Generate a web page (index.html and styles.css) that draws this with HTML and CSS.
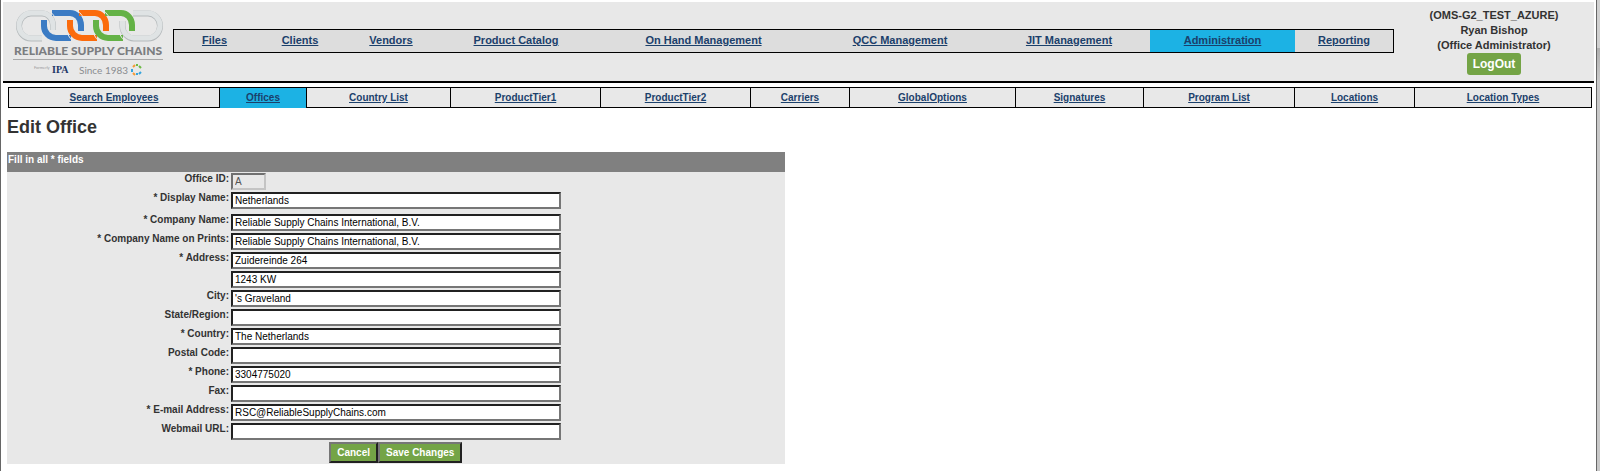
FILE: index.html
```html
<!DOCTYPE html>
<html lang="en">
<head>
<meta charset="utf-8">
<title>Edit Office</title>
<link rel="stylesheet" href="styles.css">
</head>
<body>
<div class="page">
  <header class="masthead">
    <a class="logo" href="#" aria-label="Reliable Supply Chains">
      <svg class="logo-art" viewBox="0 0 154 72" width="154" height="72">
        <g fill="none">
          <g stroke="#b5babc" stroke-width="6">
            <path d="M29 31.500H18A12 12.500 0 0 1 18 6.500H29A11 12 0 0 1 40 18V23"/>
            <path d="M109.500 14V19A12 12.500 0 0 0 121 31.500H135A12 12.500 0 0 0 135 6.500H120"/>
          </g>
          <g stroke="#dfe3e4" stroke-width="5">
            <path d="M29 31H18A12 12.500 0 0 1 18 6H29A11 12 0 0 1 40 18V23"/>
            <path d="M109.500 14V19A12 12 0 0 0 121 31H135A12 12.500 0 0 0 135 6H120"/>
          </g>
          <g stroke-width="6">
            <path stroke="#3b7bc4" d="M31 13V19A12 12 0 0 0 43 31H58M39 6H57A11 12 0 0 1 68 18V24"/>
            <path stroke="#fb6b0c" d="M57 13V19A12 12 0 0 0 69 31H84M66 6H82A11 12 0 0 1 93 18V24"/>
            <path stroke="#64b246" d="M83 13V19A12 12 0 0 0 95 31H110M92 6H108A11 12 0 0 1 119 18V24"/>
          </g>
          <g stroke="#e8e8e8" stroke-width="1">
            <path d="M63 3Q71 7 72 18M89 3Q97 7 98 18M53 18Q53 29 61 35M79 18Q79 29 87 35M105 18Q105 29 113 35M36 4Q43 8 44 18"/>
          </g>
        </g>
        <text class="logo-name" x="75" y="48" text-anchor="middle">RELIABLE SUPPLY CHAINS</text>
        <path stroke="#a8a8a8" d="M0 52.500H150"/>
        <text class="logo-small" x="21" y="62">Formerly</text>
        <text class="logo-ipa" x="39" y="66">IPA</text>
        <text class="logo-since" x="66" y="67">Since 1983</text>
        <g fill="none" stroke-width="2">
          <path stroke="#f59a35" d="M120 60L122 58M120 66L122 68"/>
          <path stroke="#6cba45" d="M123 58H125M126 59L128 61"/>
          <path stroke="#36a5dc" d="M119 62V65M123 67H125M126 67L128 65"/>
        </g>
      </svg>
    </a>
    <nav class="main-nav" aria-label="Main">
      <span><a href="#">Files</a></span>
      <span><a href="#">Clients</a></span>
      <span><a href="#">Vendors</a></span>
      <span><a href="#">Product Catalog</a></span>
      <span><a href="#">On Hand Management</a></span>
      <span><a href="#">QCC Management</a></span>
      <span><a href="#">JIT Management</a></span>
      <span class="current"><a href="#">Administration</a></span>
      <span><a href="#">Reporting</a></span>
    </nav>
    <div class="account">
      <div>(OMS-G2_TEST_AZURE)</div>
      <div>Ryan Bishop</div>
      <div>(Office Administrator)</div>
      <button class="logout" type="button">LogOut</button>
    </div>
  </header>
  <nav class="sub-nav" aria-label="Administration">
    <span><a href="#">Search Employees</a></span>
    <span class="current"><a href="#">Offices</a></span>
    <span><a href="#">Country List</a></span>
    <span><a href="#">ProductTier1</a></span>
    <span><a href="#">ProductTier2</a></span>
    <span><a href="#">Carriers</a></span>
    <span><a href="#">GlobalOptions</a></span>
    <span><a href="#">Signatures</a></span>
    <span><a href="#">Program List</a></span>
    <span><a href="#">Locations</a></span>
    <span><a href="#">Location Types</a></span>
  </nav>
  <main>
    <h1>Edit Office</h1>
    <form class="panel">
      <h2>Fill in all * fields</h2>
      <div class="row"><label for="id">Office ID:</label><input class="short" id="id" value="A" disabled></div>
      <div class="row spaced"><label for="display">* Display Name:</label><input id="display" value="Netherlands"></div>
      <div class="row"><label for="company">* Company Name:</label><input id="company" value="Reliable Supply Chains International, B.V."></div>
      <div class="row"><label for="prints">* Company Name on Prints:</label><input id="prints" value="Reliable Supply Chains International, B.V."></div>
      <div class="row"><label for="address">* Address:</label><input id="address" value="Zuidereinde 264"></div>
      <div class="row"><span></span><input id="address2" aria-label="Address line 2" value="1243 KW"></div>
      <div class="row"><label for="city">City:</label><input id="city" value="'s Graveland"></div>
      <div class="row"><label for="state">State/Region:</label><input id="state"></div>
      <div class="row"><label for="country">* Country:</label><input id="country" value="The Netherlands"></div>
      <div class="row"><label for="postal">Postal Code:</label><input id="postal"></div>
      <div class="row"><label for="phone">* Phone:</label><input id="phone" value="3304775020"></div>
      <div class="row"><label for="fax">Fax:</label><input id="fax"></div>
      <div class="row"><label for="email">* E-mail Address:</label><input id="email" value="RSC@ReliableSupplyChains.com"></div>
      <div class="row"><label for="webmail">Webmail URL:</label><input id="webmail"></div>
      <div class="actions"><button type="button">Cancel</button><button type="submit">Save Changes</button></div>
    </form>
  </main>
</div>
<div class="window-edge"></div>
</body>
</html>
```
FILE: styles.css
```css
* { box-sizing: border-box; }
body {
  display: flex;
  min-height: 100vh;
  margin: 0;
  background: #fff;
  color: #333;
  font-family: "Liberation Sans", Arial, sans-serif;
  font-size: 10px;
  font-weight: bold;
}
a { color: #1b406b; }
.page {
  flex: 1;
  min-width: 0;
  padding: 2px 2px 0;
  border-left: 1px solid #666;
}
.window-edge {
  width: 4px;
  border-left: 1px solid #666;
  background: linear-gradient(#d0d0d0 48px, #b0b0b0 48px, #c8c8c8 80px);
}
.masthead {
  display: flex;
  align-items: flex-start;
  height: 81px;
  border-bottom: 2px solid #000;
  background: #e8e8e8;
}
.logo { flex: 0 0 170px; padding: 5px 0 0 10px; }
.logo-art { display: block; }
.logo-name { font: 900 12px Lato, sans-serif; fill: #7b7d80; }
.logo-small { font: 4px Lato, sans-serif; fill: #999; }
.logo-ipa { font: bold 10px "Liberation Serif", serif; fill: #1d3767; }
.logo-since { font: 10px Lato, sans-serif; fill: #8b8d90; }
.main-nav {
  display: grid;
  grid-template-columns: 81fr 90fr 92fr 158fr 217fr 176fr 162fr 145fr 98fr;
  flex: 1;
  height: 24px;
  margin-top: 27px;
  border: 1px solid #000;
  background: #ddd;
  font-size: 11px;
  line-height: 21px;
  text-align: center;
}
.current { background: #1cb2e4; }
.account {
  flex: 0 0 200px;
  padding-top: 6px;
  font-size: 11px;
  line-height: 15px;
  text-align: center;
}
.logout {
  height: 22px;
  padding: 0 6px;
  border: 0;
  border-radius: 3px;
  background: #74a446;
  color: #fff;
  font: bold 12px/22px "Liberation Sans", Arial, sans-serif;
}
.sub-nav {
  display: grid;
  grid-template-columns: 210fr 87fr 144fr 150fr 150fr 99fr 166fr 128fr 151fr 120fr 177fr;
  height: 21px;
  margin: 4px 2px 0 5px;
  border: 1px solid #000;
  background: #e8e8e8;
  line-height: 20px;
  text-align: center;
}
.sub-nav span + span { border-left: 1px solid #000; }
main { padding-left: 4px; }
h1 { margin: 8px 0 14px; font-size: 18px; line-height: 22px; }
.panel { width: 49%; min-width: 560px; padding-bottom: 1px; background: #e8e8e8; }
h2 {
  height: 20px;
  margin: 0 0 1px;
  padding-left: 1px;
  background: #808080;
  color: #fff;
  font-size: 10px;
  line-height: 15px;
}
.row {
  display: grid;
  grid-template-columns: 222px 330px;
  gap: 2px;
  height: 17px;
  margin-bottom: 2px;
  line-height: 12px;
  text-align: right;
}
.spaced { margin-bottom: 5px; }
input {
  width: 100%;
  height: 17px;
  padding: 1px 2px;
  border: 2px inset #767676;
  border-radius: 0;
  background: #fff;
  color: #000;
  font: 10px "Liberation Sans", Arial, sans-serif;
}
.short { width: 35px; }
input:disabled { border-color: #c4c4c4; background: #e8e8e8; color: #545454; }
.actions { display: flex; justify-content: center; }
.actions button {
  height: 21px;
  padding: 0 6px;
  border: 2px outset #767676;
  background: #74a446;
  color: #fff;
  font: bold 10px "Liberation Sans", Arial, sans-serif;
}
```
